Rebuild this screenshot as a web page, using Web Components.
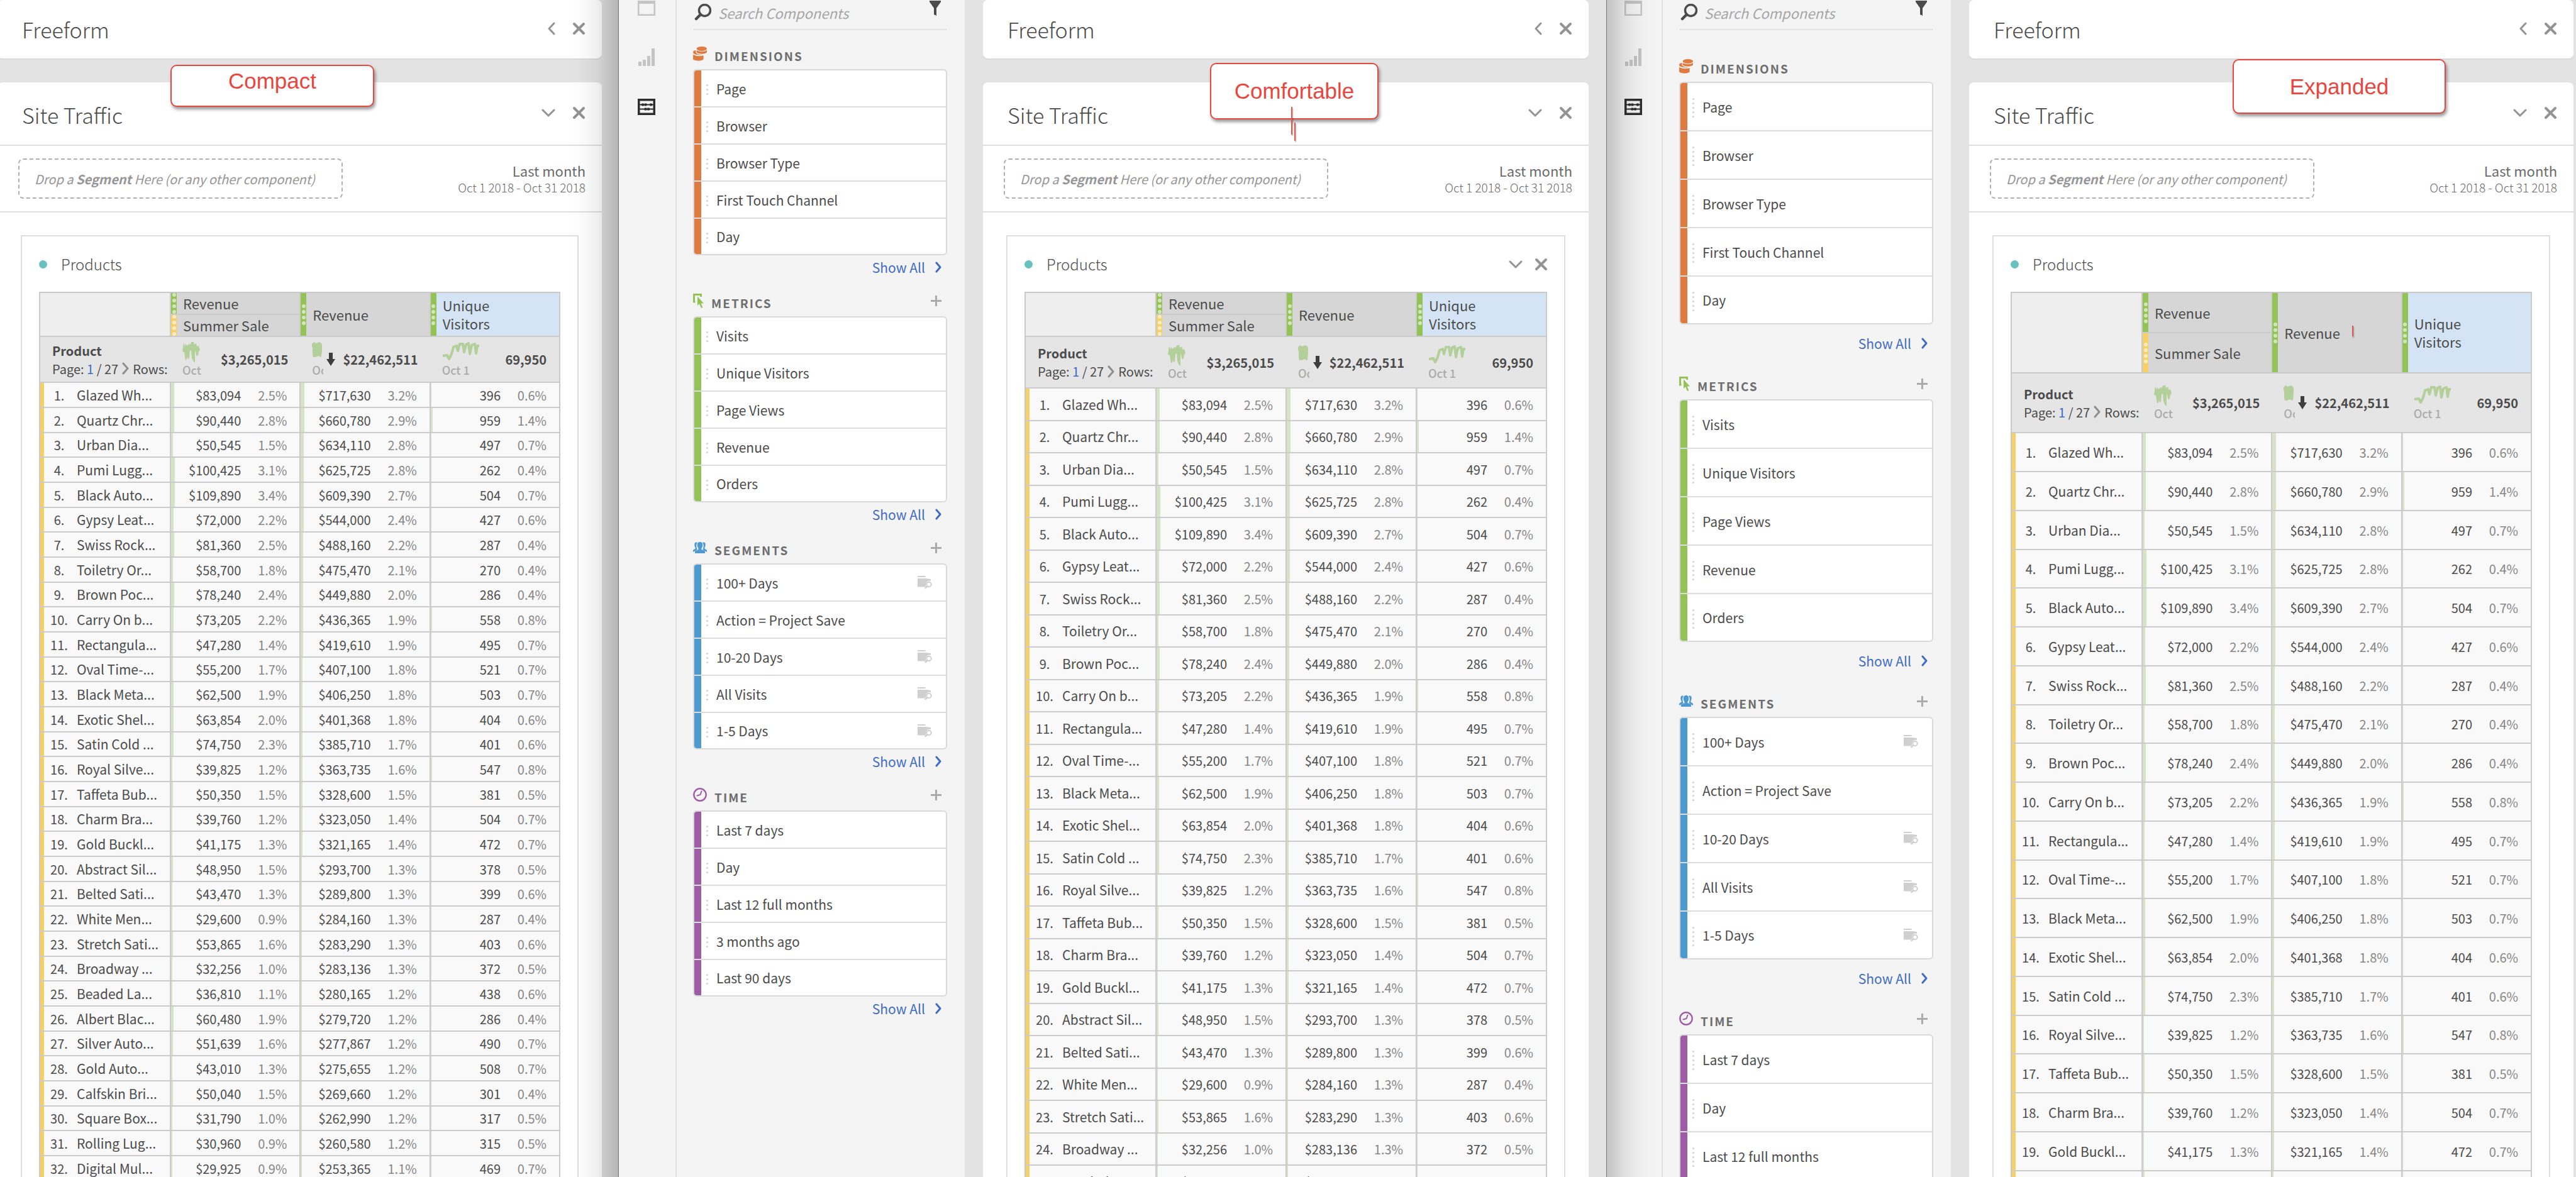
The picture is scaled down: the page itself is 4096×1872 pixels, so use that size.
<!DOCTYPE html>
<html lang="en">
<head>
<meta charset="utf-8">
<title>Table density comparison</title>
<style>
  html, body { margin: 0; height: 100%; }
  body {
    overflow: hidden;
    background: #e3e3e3;
    color: #4b4b4b;
    font-family: "Noto Sans CJK SC", "Noto Sans", sans-serif;
    font-size: 22px;
  }
</style>
</head>
<body>
<density-board></density-board>

<script>
const RESET = `
  *, *::before, *::after { box-sizing: border-box; }
  :host { display: block; min-width: 0; }
  button { appearance: none; border: 0; background: none; padding: 0; margin: 0; font: inherit; color: inherit; display: block; }
  a { color: #3f6bc4; text-decoration: none; }
  b { font-weight: 700; }
  svg { display: block; flex: none; }
`;

const define = (name, render) => {
  customElements.define(name, class extends HTMLElement {
    connectedCallback() {
      if (this.shadowRoot) return;
      const root = this.attachShadow({ mode: 'open' });
      const template = document.createElement('template');
      template.innerHTML = render(this);
      root.append(template.content.cloneNode(true));
    }
  });
};

/* ---------- icons ---------- */
const ICONS = {
  close: [21, 21, `<path d="M3 3 18 18M18 3 3 18" fill="none" stroke="#939393" stroke-width="4" stroke-linecap="round"/>`],
  left: [14, 23, `<path d="M11 3 3 11.500 11 20" fill="none" stroke="#939393" stroke-width="3" stroke-linecap="round" stroke-linejoin="round"/>`],
  down: [24, 14, `<path d="M3 3 12 12 21 3" fill="none" stroke="#939393" stroke-width="3" stroke-linecap="round" stroke-linejoin="round"/>`],
  right: [10, 18, `<path d="M2 2 8 9 2 16" fill="none" stroke="#3f6bc4" stroke-width="3" stroke-linecap="round" stroke-linejoin="round"/>`],
  page: [11, 20, `<path d="M2 2 9 10 2 18" fill="none" stroke="#8e8e8e" stroke-width="3" stroke-linecap="round" stroke-linejoin="round"/>`],
  plus: [17, 17, `<path d="M8.500 0V17M0 8.500H17" fill="none" stroke="#ababab" stroke-width="3"/>`],
  search: [27, 27, `<circle cx="16.500" cy="10.500" r="9" fill="none" stroke="#4b4b4b" stroke-width="3.500"/><path d="M10 17 3 24" stroke="#4b4b4b" stroke-width="4.500" stroke-linecap="round"/>`],
  funnel: [18, 24, `<path d="M0 0H18V2L11 12V24L7 22V12L0 2Z" fill="#4b4b4b"/>`],
  panelBox: [28, 24, `<rect x="1.250" y="1.250" width="25.500" height="21.500" fill="none" stroke="#c4c4c4" stroke-width="2.500"/><path d="M0 1H28V5H0Z" fill="#c4c4c4"/>`],
  bars: [28, 28, `<path d="M1 21h5v7H1zM8 18h5v10H8zM15 12h5v16H15zM22 0h5v28H22z" fill="#c4c4c4"/>`],
  abacus: [28, 26, `<rect x="1.750" y="1.750" width="24.500" height="22.500" fill="none" stroke="#2e2e2e" stroke-width="3.500"/><path d="M2 9.500H26M2 16.500H26" stroke="#2e2e2e" stroke-width="2"/><g fill="#2e2e2e"><rect x="6" y="7.500" width="4" height="4" rx="1"/><rect x="10.500" y="7.500" width="4" height="4" rx="1"/><rect x="19" y="7.500" width="4" height="4" rx="1"/><rect x="10.500" y="14.500" width="4" height="4" rx="1"/><rect x="15" y="14.500" width="4" height="4" rx="1"/></g>`],
  coins: [22, 23, `<g fill="#e07b40"><path d="M0 9C0 7 2 6.300 4.500 6V8.500C4.500 11.500 9 13 14 13V13.200C11 14 0 13.500 0 9Z"/><path d="M0 12.500C3 15.500 12 16 16.600 14V20C15 23.500 2 23.500 0 20Z"/><ellipse cx="13.800" cy="3.500" rx="8.200" ry="3.400"/><path d="M5.600 5.800C8 8.600 19 8.800 22 5.800V9C20 12.600 8 12.600 5.600 9Z"/></g>`],
  metric: [17, 23, `<path d="M3.500 13H1.500V1.500H12.500V5" fill="none" stroke="#93c356" stroke-width="3"/><path d="M7 4.500V19L10 16.300 13 23 15.300 21.900 12.500 15.500H17Z" fill="#93c356"/>`],
  people: [22, 18, `<g fill="#4c9ad1"><path d="M7 1C3.500-.5 2 2 2.300 5C2.500 8 4 8.500 3.700 10.500L0 13V16L6.500 12.500C6.500 11 5.300 9.500 5.300 6C5.300 4 5.800 2.300 7 1Z"/><path d="M15 1C18.500-.5 20 2 19.700 5C19.500 8 18 8.500 18.300 10.500L22 13V16L15.500 12.500C15.500 11 16.700 9.500 16.700 6C16.700 4 16.200 2.300 15 1Z"/><path d="M11 0C7.500 0 6.500 2.500 6.800 5.500C7 9 9 9.500 8.600 12L3 14.600V18H19V14.600L13.400 12C13 9.500 15 9 15.200 5.500C15.500 2.500 14.500 0 11 0Z"/></g>`],
  clock: [22, 22, `<circle cx="11" cy="11" r="9.700" fill="none" stroke="#9f5ca6" stroke-width="2.400"/><path d="M13.500 5.500 11.500 11 6.500 12.500" fill="none" stroke="#9f5ca6" stroke-width="2" stroke-linecap="round"/>`],
  folder: [23, 21, `<g fill="#cfcfcf"><path d="M0 0H12.500V2H0Z"/><path d="M0 4H13L21 5V8C16 7 13 10 13.500 14L12 17.500H0Z"/></g><circle cx="18" cy="13.500" r="3.700" fill="none" stroke="#cfcfcf" stroke-width="2"/><path d="M15 16.500 12.500 19" stroke="#cfcfcf" stroke-width="2.500" stroke-linecap="round"/>`],
  arrow: [14, 21, `<path d="M4 0H10V10H14L7 21 0 10H4Z" fill="#3e3e3e"/>`],
  sparkA: [28, 33, `<path d="M0 15 2 1 4 7 5 3 8 6 10 3 13 4 14 0 18 0 19 4 22 2 23 7 26 6 28 13 26 15 25 21 22 22 21 13 20 17 20 33 17 30 15 25 14 13 12 14 11 26 9 27 8 23 7 27 5 29 3 16 0 15Z" fill="#b3cf9a"/>`],
  sparkB: [17, 33, `<path d="M0 7 0 3 2 1 4 0 6 2 9 1 12 0 15 2 16 5 16 13 15 23 13 24 11 22 8 23 5 24 2 24 1 20 1 10Z" fill="#b3cf9a"/>`],
  sparkC: [60, 33, `<path d="M1 22 8 21 11 27 15 19 18 8 23 6 25 14 28 3 33 3 35 16 38 4 42 2 44 19 47 5 52 3 54 18 56 6 59 6" fill="none" stroke="#b3cf9a" stroke-width="4" stroke-linejoin="round"/>`]
};
const icon = name => {
  const [w, h, body] = ICONS[name];
  return `<svg width="${w}" height="${h}" viewBox="0 0 ${w} ${h}" aria-hidden="true">${body}</svg>`;
};

/* ---------- data ---------- */
const ROWS = `Glazed Wh...|$83,094|2.5|$717,630|3.2|396|0.6
Quartz Chr...|$90,440|2.8|$660,780|2.9|959|1.4
Urban Dia...|$50,545|1.5|$634,110|2.8|497|0.7
Pumi Lugg...|$100,425|3.1|$625,725|2.8|262|0.4
Black Auto...|$109,890|3.4|$609,390|2.7|504|0.7
Gypsy Leat...|$72,000|2.2|$544,000|2.4|427|0.6
Swiss Rock...|$81,360|2.5|$488,160|2.2|287|0.4
Toiletry Or...|$58,700|1.8|$475,470|2.1|270|0.4
Brown Poc...|$78,240|2.4|$449,880|2.0|286|0.4
Carry On b...|$73,205|2.2|$436,365|1.9|558|0.8
Rectangula...|$47,280|1.4|$419,610|1.9|495|0.7
Oval Time-...|$55,200|1.7|$407,100|1.8|521|0.7
Black Meta...|$62,500|1.9|$406,250|1.8|503|0.7
Exotic Shel...|$63,854|2.0|$401,368|1.8|404|0.6
Satin Cold ...|$74,750|2.3|$385,710|1.7|401|0.6
Royal Silve...|$39,825|1.2|$363,735|1.6|547|0.8
Taffeta Bub...|$50,350|1.5|$328,600|1.5|381|0.5
Charm Bra...|$39,760|1.2|$323,050|1.4|504|0.7
Gold Buckl...|$41,175|1.3|$321,165|1.4|472|0.7
Abstract Sil...|$48,950|1.5|$293,700|1.3|378|0.5
Belted Sati...|$43,470|1.3|$289,800|1.3|399|0.6
White Men...|$29,600|0.9|$284,160|1.3|287|0.4
Stretch Sati...|$53,865|1.6|$283,290|1.3|403|0.6
Broadway ...|$32,256|1.0|$283,136|1.3|372|0.5
Beaded La...|$36,810|1.1|$280,165|1.2|438|0.6
Albert Blac...|$60,480|1.9|$279,720|1.2|286|0.4
Silver Auto...|$51,639|1.6|$277,867|1.2|490|0.7
Gold Auto...|$43,010|1.3|$275,655|1.2|508|0.7
Calfskin Bri...|$50,040|1.5|$269,660|1.2|301|0.4
Square Box...|$31,790|1.0|$262,990|1.2|317|0.5
Rolling Lug...|$30,960|0.9|$260,580|1.2|315|0.5
Digital Mul...|$29,925|0.9|$253,365|1.1|469|0.7`.split('\n').map(line => line.split('|'));

const GROUPS = [
  { title: 'Dimensions', icon: 'coins', color: '#e07b40', items: ['Page', 'Browser', 'Browser Type', 'First Touch Channel', 'Day'] },
  { title: 'Metrics', icon: 'metric', color: '#93c356', add: true, items: ['Visits', 'Unique Visitors', 'Page Views', 'Revenue', 'Orders'] },
  { title: 'Segments', icon: 'people', color: '#4c9ad1', add: true, items: ['100+ Days*', 'Action = Project Save', '10-20 Days*', 'All Visits*', '1-5 Days*'] },
  { title: 'Time', icon: 'clock', color: '#9f5ca6', add: true, items: ['Last 7 days', 'Day', 'Last 12 full months', '3 months ago', 'Last 90 days'] }
];

/* ---------- icon rail ---------- */
define('tool-rail', () => `
  <style>${RESET}
    :host { border-right: 2px solid #e1e1e1; background: #f4f4f4; }
    nav { display: flex; flex-direction: column; align-items: center; gap: 52px; padding-top: 1px; padding-right: 2px; }
  </style>
  <nav aria-label="Panels">
    <button aria-label="Panels">${icon('panelBox')}</button>
    <button aria-label="Visualizations">${icon('bars')}</button>
    <button aria-label="Components">${icon('abacus')}</button>
  </nav>`);

/* ---------- component list ---------- */
define('component-group', host => {
  const group = GROUPS[host.getAttribute('index')];
  const dots = '<i></i>'.repeat(host.getAttribute('dots'));
  return `
  <style>${RESET}
    :host { font-size: 21px; }
    header { display: flex; align-items: center; height: 46px; padding-right: 9px; }
    header svg { margin-bottom: 4px; }
    h2 { flex: 1; margin: 3px 0 0 12px; font-size: 19px; font-weight: 700; line-height: 30px; letter-spacing: 2px; color: #6e6e6e; text-transform: uppercase; }
    ul { list-style: none; margin: 0; padding: 0; border: 2px solid #d9d9d9; border-radius: 6px; background: #fff; overflow: hidden; }
    li { display: flex; align-items: center; height: var(--item); padding-right: 22px; border-bottom: 2px solid #dcdcdc; }
    li:last-child { height: calc(var(--item) - 3px); border-bottom: 0; }
    .tone { align-self: stretch; width: 11px; background: ${group.color}; }
    .grip { display: flex; flex-direction: column; gap: 4px; width: 3px; margin: 4px 13px 0 8px; }
    .grip i { width: 3px; height: 3px; border-radius: 50%; background: #d0d0d0; }
    .name { flex: 1; white-space: nowrap; }
    footer { display: flex; justify-content: flex-end; height: var(--foot); padding-right: 9px; }
    footer a { display: flex; align-items: center; gap: 16px; height: var(--link); }
  </style>
  <header>${icon(group.icon)}<h2>${group.title}</h2>${group.add ? `<button aria-label="Add">${icon('plus')}</button>` : ''}</header>
  <ul>${group.items.map(item => `
    <li><span class="tone"></span><span class="grip">${dots}</span><span class="name">${item.replace('*', '')}</span>${item.endsWith('*') ? icon('folder') : ''}</li>`).join('')}
  </ul>
  <footer><a href="#"><span>Show All</span>${icon('right')}</a></footer>`;
});

define('component-sidebar', host => `
  <style>${RESET}
    :host { background: #f4f4f4; padding: 0 28px 0 26px; }
    .search { display: flex; align-items: flex-start; height: 48px; margin-bottom: var(--lead); padding: 0 10px 0 2px; border-bottom: 2px solid #e3e3e3; }
    .search svg { margin-top: 6px; }
    .search button svg { margin-top: 1px; }
    input { flex: 1; min-width: 0; height: 32px; margin: 4px 0 0 11px; padding: 0; border: 0; background: none; outline: 0; font: italic 22px/32px "Noto Sans CJK SC", sans-serif; color: #4b4b4b; }
    input::placeholder { color: #a6a6a6; opacity: 1; }
  </style>
  <div class="search">${icon('search')}<input type="text" aria-label="Search Components" placeholder="Search Components"><button aria-label="Filter">${icon('funnel')}</button></div>
  ${GROUPS.map((g, i) => `<component-group index="${i}" dots="${host.getAttribute('dots')}"></component-group>`).join('')}`);

/* ---------- data table ---------- */
define('density-table', host => {
  const grip = '<span class="grip"><i></i><i></i><i></i><i></i></span>';
  const metric = (value, pct) =>
    `<td class="num" style="--bar:${Math.min(6, Math.round(pct * 1.9))}px"><span>${value}</span><span class="pct">${pct}%</span></td>`;
  return `
  <style>${RESET}
    table { width: 100%; table-layout: fixed; border-collapse: separate; border-spacing: 0; border: 2px solid #c9c9c9; border-bottom: 0; border-right: 0; font-size: 20px; line-height: 29px; }
    col:first-child { width: 208px; }
    th, td { padding: 0; border: 0 solid #cbcbcb; border-bottom-width: 2px; text-align: left; font-weight: 400; }
    th:last-child, td:last-child { border-right-width: 2px; }
    .names th { background: #d6d6d6; font-size: 22px; color: #4b4b4b; border-right-width: 2px; }
    .names th.blank { background: #eee; }
    .names th.picked { background: #d4e4f4; }
    .head { display: flex; align-items: center; gap: 10px; height: var(--head); overflow: hidden; }
    .tall { height: calc(var(--head) * 2 + 2px); }
    .grip { display: flex; flex: none; flex-direction: column; align-items: center; justify-content: center; gap: 3px; align-self: stretch; width: 9px; background: #93c356; overflow: hidden; }
    .grip i { flex: none; width: 6px; height: 6px; border-radius: 50%; background: #d3e6bb; }
    .sale .grip { background: #f6cf66; }
    .sale .grip i { background: #fcecc2; }
    .totals td { background: #e5e5e5; }
    .sum { display: flex; align-items: center; height: var(--totals); padding: 0 20px 0 18px; }
    .sum b { white-space: nowrap; }
    .sum svg + b { margin-left: 12px; }
    .trend { flex: none; margin-right: auto; overflow: hidden; font-size: 18px; line-height: 22px; color: #ababab; font-weight: 500; white-space: nowrap; }
    .trend svg { height: 33px; }
    .pager { flex: 1; white-space: nowrap; }
    .pager div { display: flex; align-items: center; gap: 6px; }
    .first { padding: 0 0 0 19px; }
    .rows td { height: var(--row); background: #f9f9f9; white-space: nowrap; }
    .rows td:not(:last-child) { border-right-width: 2px; }
    .rows tr:nth-child(${host.getAttribute('step')}) td { height: calc(var(--row) - 1px); }
    .rows td:first-child { background: linear-gradient(#f6cf66, #f6cf66) left / 6px 100% no-repeat #f9f9f9; font-size: 21px; }
    .no { display: inline-block; width: 36px; margin: 0 10px 0 12px; font-size: 20px; text-align: center; }
    .rows td.num { padding-right: 20px; text-align: right; background: linear-gradient(#d4e4c4, #d4e4c4) left / var(--bar) 100% no-repeat #f9f9f9; }
    .pct { display: inline-block; width: 73px; color: #868686; }
  </style>
  <table>
    <colgroup><col><col><col><col></colgroup>
    <thead>
      <tr class="names">
        <th class="blank" rowspan="2"></th>
        <th><div class="head">${grip}<span>Revenue</span></div></th>
        <th rowspan="2"><div class="head tall">${grip}<span>Revenue</span></div></th>
        <th class="picked" rowspan="2"><div class="head tall">${grip}<span>Unique<br>Visitors</span></div></th>
      </tr>
      <tr class="names"><th><div class="head sale">${grip}<span>Summer Sale</span></div></th></tr>
      <tr class="totals">
        <td><div class="sum first"><div class="pager"><b>Product</b><div><span>Page: <a href="#">1</a> / 27</span>${icon('page')}<span>Rows:</span></div></div></div></td>
        <td><div class="sum"><div class="trend" style="width:30px">${icon('sparkA')}Oct</div><b>$3,265,015</b></div></td>
        <td><div class="sum"><div class="trend" style="width:18px">${icon('sparkB')}Oct</div>${icon('arrow')}<b>$22,462,511</b></div></td>
        <td><div class="sum"><div class="trend" style="width:60px">${icon('sparkC')}Oct 1</div><b>69,950</b></div></td>
      </tr>
    </thead>
    <tbody class="rows">${ROWS.slice(0, host.getAttribute('count')).map((r, i) => `
      <tr><td><span class="no">${i + 1}.</span>${r[0]}</td>${metric(r[1], r[2])}${metric(r[3], r[4])}${metric(r[5], r[6])}</tr>`).join('')}
    </tbody>
  </table>`;
});

/* ---------- workspace cards ---------- */
define('panel-card', host => `
  <style>${RESET}
    :host { background: #fff; border-radius: 8px; box-shadow: 0 2px 0 #d9d9d9; }
    header { display: flex; align-items: center; height: var(--bar-height, 99px); padding: 0 26px 0 39px; }
    h1 { flex: 1; margin: var(--title-drop, 4px) 0 0; font-size: 34px; line-height: 48px; font-weight: 300; white-space: nowrap; }
    .actions { display: flex; align-items: center; gap: 26px; padding-bottom: 3px; }
  </style>
  <header><h1>${host.getAttribute('heading')}</h1>
    <div class="actions"><button aria-label="Collapse">${icon(host.getAttribute('toggle'))}</button><button aria-label="Close">${icon('close')}</button></div>
  </header>
  <slot></slot>`);

define('segment-bar', () => `
  <style>${RESET}
    :host { display: flex; align-items: center; justify-content: space-between; height: 108px; padding: 0 26px 0 33px; border: 0 solid #dedede; border-width: 2px 0; }
    .drop { display: flex; align-items: center; width: 516px; height: 64px; padding-left: 24px; border: 2px dashed #b0b0b0; border-radius: 8px; color: #969696; font-style: italic; font-size: 20px; white-space: nowrap; }
    .range { text-align: right; line-height: 28px; }
    .range div { color: #6a6a6a; }
    .range small { display: block; font-size: 19px; font-weight: 300; line-height: 26px; color: #6c6c6c; }
  </style>
  <div class="drop"><span>Drop a <b>Segment</b> Here (or any other component)</span></div>
  <div class="range"><div>Last month</div><small>Oct 1 2018 - Oct 31 2018</small></div>`);

define('products-box', host => `
  <style>${RESET}
    :host { margin: 36px 37px 0; border: 2px solid #dedede; }
    header { display: flex; align-items: center; height: 88px; padding: 0 26px 0 27px; }
    i { width: 13px; height: 13px; border-radius: 50%; background: #68c1c0; }
    h2 { flex: 1; margin: 0 0 0 22px; font-size: 24px; line-height: 34px; font-weight: 300; }
    .actions { display: flex; align-items: center; gap: 18px; }
    .body { padding: 0 27px; }
  </style>
  <header><i></i><h2>Products</h2>${host.hasAttribute('controls') ? `
    <div class="actions"><button aria-label="Collapse">${icon('down')}</button><button aria-label="Close">${icon('close')}</button></div>` : ''}
  </header>
  <div class="body"><slot></slot></div>`);

/* ---------- annotation ---------- */
define('note-callout', () => `
  <style>${RESET}
    :host { position: absolute; display: flex; align-items: center; justify-content: center; border: 2px solid #e5483f; border-radius: 10px; background: #fff; box-shadow: 2px 4px 5px rgba(0,0,0,.4); color: #e8463e; font: 35px/40px "Liberation Sans", Arial, sans-serif; }
  </style>
  <slot></slot>`);

define('pen-mark', () => `
  <style>${RESET}
    :host { position: absolute; width: 2px; background: #dd5a50; box-shadow: 1px 2px 2px rgba(0,0,0,.3); }
  </style>`);

/* ---------- one density view ---------- */
define('density-view', host => `
  <style>${RESET}
    :host { position: relative; display: flex; height: 100%; background: #e3e3e3; }
    .main { flex: 1; min-width: 0; }
    .main panel-card + panel-card { margin-top: 38px; }
  </style>
  <slot name="side"></slot>
  <div class="main">
    <panel-card heading="Freeform" toggle="left" style="--bar-height:93px;--title-drop:0px"></panel-card>
    <panel-card heading="Site Traffic" toggle="down">
      <segment-bar></segment-bar>
      <products-box ${host.hasAttribute('controls') ? 'controls' : ''}>
        <density-table count="${host.getAttribute('count')}" step="${host.getAttribute('step')}"></density-table>
      </products-box>
    </panel-card>
  </div>
  <slot></slot>`);

define('density-board', () => `
  <style>${RESET}
    :host { position: relative; display: grid; grid-template-columns: 984fr 1570fr 1542fr; height: 100vh; overflow: hidden; }
    density-view { overflow: hidden; }
    .compact { --head: 33px; --totals: 71px; --row: 40px; padding: 0 27px 0 0; }
    .comfortable { --head: 33px; --totals: 80px; --row: 52px; --item: 59px; --foot: 51px; --link: 37px; --lead: 16px; padding-right: 28px; }
    .expanded { --head: 62px; --totals: 93px; --row: 62px; --item: 77px; --foot: 73px; --link: 60px; --lead: 36px; padding-right: 4px; }
    .compact { margin-left: -4px; }
    tool-rail { flex: none; width: 92px; }
    .expanded tool-rail { width: 90px; }
    component-sidebar { flex: none; width: 458px; margin-right: 29px; }
    .front { position: relative; z-index: 1; min-width: 0; }
    .front::before { content: ""; position: absolute; inset: -100px 0; box-shadow: 0 0 66px rgba(0,0,0,.42), 0 0 0 1px #999; }
    .compact note-callout { left: 275px; top: 103px; width: 324px; height: 67px; padding-bottom: 16px; }
    .comfortable note-callout { left: 940px; top: 100px; width: 268px; height: 90px; }
    .expanded note-callout { left: 996px; top: 94px; width: 339px; height: 87px; }
    .stroke-a { left: 1069px; top: 170px; height: 44px; }
    .stroke-b { left: 1074px; top: 195px; height: 29px; }
    .tick { left: 1186px; top: 518px; height: 17px; }
  </style>
  <density-view class="compact" count="32" step="3n">
    <note-callout>Compact</note-callout>
  </density-view>
  <div class="front">
    <density-view class="comfortable" count="25" step="2n" controls>
      <tool-rail slot="side"></tool-rail>
      <component-sidebar slot="side" dots="3"></component-sidebar>
      <note-callout>Comfortable</note-callout>
      <pen-mark class="stroke-a"></pen-mark>
      <pen-mark class="stroke-b"></pen-mark>
    </density-view>
  </div>
  <density-view class="expanded" count="20" step="4n">
    <tool-rail slot="side"></tool-rail>
    <component-sidebar slot="side" dots="5"></component-sidebar>
    <note-callout>Expanded</note-callout>
    <pen-mark class="tick"></pen-mark>
  </density-view>`);
</script>
</body>
</html>
